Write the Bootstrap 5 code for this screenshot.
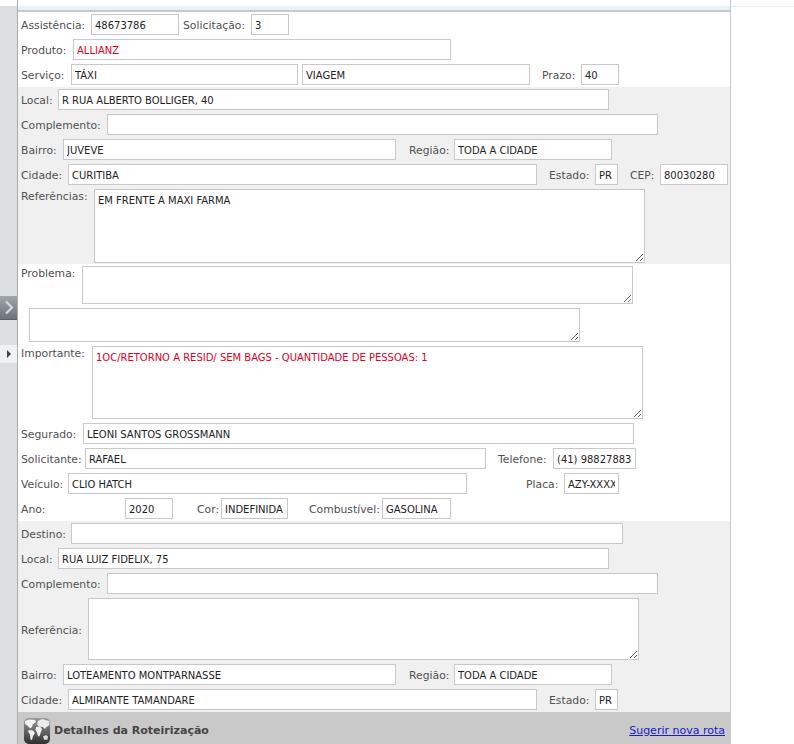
<!DOCTYPE html>
<html lang="pt-BR">
<head>
<meta charset="utf-8">
<title>Assistência</title>
<link href="https://cdn.jsdelivr.net/npm/bootstrap@5.3.0/dist/css/bootstrap.min.css" rel="stylesheet">
<style>
html,body{height:744px;overflow:hidden;background:#fff}
body{font-family:"DejaVu Sans",sans-serif;font-size:10.8px;color:#505050}
.shell{height:744px;width:731px;position:relative}
.side{width:18px;background:#dcdfe0;border-right:1px solid #a9acad;flex:none}
.sidecap{height:6px;background:#fff}
.pane{width:713px;flex:none;border-right:1px solid #c8c8c8}
.topline{position:absolute;left:0;top:6px;width:794px;height:1px;background:#e4eef0}
.topband{height:4px;background:#e8f3f5;margin-top:6px}
.topedge{height:2px;background:#c8c8c8}
.sect{display:flex;flex-direction:column;gap:4px;padding:2px 0 2px 3px}
.sect-gray{background:#f0f0f0}
.tight{padding-bottom:1px}
.fr{display:flex;height:21px;align-items:center;flex:none}
.fr-top{align-items:flex-start;height:auto}
.lb{flex:none;white-space:nowrap;line-height:21px;padding-top:1px}
.fr-top .lb{line-height:14px;padding-top:1px}
.fr-top .lb-mid{padding-top:3px}
.fr .form-control{flex:none;height:21px;min-height:0;padding:1px 3px 0;border:1px solid #c8c8c8;border-radius:0;font-family:"DejaVu Sans Condensed","DejaVu Sans",sans-serif;font-size:11.1px;color:#222;background:#fff;box-shadow:none}
.fr textarea.form-control{padding:4px 3px;resize:both;line-height:13px}
.redtx.form-control{color:#e2001a!important}
.foot{height:32px;background:#c9c9c9;padding:5px 5px 0 6px}
.foot-title{font-weight:700;font-size:11px;color:#444;padding-top:1px}
.foot-link{font-size:11px;color:#1a1ac8;text-decoration:underline;padding-top:1px}
.handle{position:absolute;left:0;top:296px;width:17px;height:24px;background:linear-gradient(#a0a6aa,#6c7379);border-bottom:1px solid #5a6066}
.tick{position:absolute;left:0;top:345px;width:17px;height:18px;background:#f0f1f1}
.h38{height:38px!important}.h34{height:34px!important}.h74{height:74px!important}.h73{height:73px!important}.h62{height:62px!important}
.w23{width:23px}.w38{width:38px}.w48{width:48px}.w55{width:55px}.w67{width:67px}.w68{width:68px}.w69{width:69px}.w83{width:83px}.w88{width:88px}.w158{width:158px}.w227{width:227px}.w228{width:228px}.w333{width:333px}.w378{width:378px}.w399{width:399px}.w401{width:401px}.w469{width:469px}.w551{width:551px}.w552{width:552px}
.l24{width:24px}.l26{width:26px}.l30{width:30px}.l37{width:37px}.l38{width:38px}.l39{width:39px}.l42{width:42px}.l45{width:45px}.l46{width:46px}.l47{width:47px}.l50{width:50px}.l52{width:52px}.l55{width:55px}.l61{width:61px}.l62{width:62px}.l64{width:64px}.l67{width:67px}.l68{width:68px}.l70{width:70px}.l71{width:71px}.l73{width:73px}.l86{width:86px}.l104{width:104px}
.m4{margin-left:4px}.m8{margin-left:8px}.m12{margin-left:12px}.m13{margin-left:13px}.m21{margin-left:21px}.m24{margin-left:24px}.m59{margin-left:59px}.m8i{margin-left:8px}
</style>
</head>
<body>
<div class="topline"></div>
<div class="shell d-flex">
  <div class="side"><div class="sidecap"></div></div>
  <div class="pane d-flex flex-column">
    <div class="topband"></div>
    <div class="topedge"></div>

    <div class="sect">
      <div class="fr"><span class="lb l70">Assistência:</span><input class="form-control w88" value="48673786" readonly><span class="lb l68 m4">Solicitação:</span><input class="form-control w38" value="3" readonly></div>
      <div class="fr"><span class="lb l52">Produto:</span><input class="form-control redtx w378" value="ALLIANZ" readonly></div>
      <div class="fr"><span class="lb l50">Serviço:</span><input class="form-control w227" value="TÁXI" readonly><input class="form-control w228 m4" value="VIAGEM" readonly><span class="lb l39 m12">Prazo:</span><input class="form-control w38" value="40" readonly></div>
    </div>

    <div class="sect sect-gray tight">
      <div class="fr"><span class="lb l37">Local:</span><input class="form-control w551" value="R RUA ALBERTO BOLLIGER, 40" readonly></div>
      <div class="fr"><span class="lb l86">Complemento:</span><input class="form-control w551" value="" readonly></div>
      <div class="fr"><span class="lb l42">Bairro:</span><input class="form-control w333" value="JUVEVE" readonly><span class="lb l45 m13">Região:</span><input class="form-control w158" value="TODA A CIDADE" readonly></div>
      <div class="fr"><span class="lb l47">Cidade:</span><input class="form-control w469" value="CURITIBA" readonly><span class="lb l46 m12">Estado:</span><input class="form-control w23" value="PR" readonly><span class="lb l30 m12">CEP:</span><input class="form-control w68" value="80030280" readonly></div>
      <div class="fr fr-top"><span class="lb l73">Referências:</span><textarea class="form-control w551 h74" readonly>EM FRENTE A MAXI FARMA</textarea></div>
    </div>

    <div class="sect">
      <div class="fr fr-top"><span class="lb l61">Problema:</span><textarea class="form-control w551 h38" readonly></textarea></div>
      <div class="fr fr-top"><textarea class="form-control w551 h34 m8i" readonly></textarea></div>
      <div class="fr fr-top"><span class="lb l71">Importante:</span><textarea class="form-control redtx w551 h73" readonly>1OC/RETORNO A RESID/ SEM BAGS - QUANTIDADE DE PESSOAS: 1</textarea></div>
      <div class="fr"><span class="lb l62">Segurado:</span><input class="form-control w551" value="LEONI SANTOS GROSSMANN" readonly></div>
      <div class="fr"><span class="lb l64">Solicitante:</span><input class="form-control w401" value="RAFAEL" readonly><span class="lb l55 m12">Telefone:</span><input class="form-control w83" value="(41) 988278838" readonly></div>
      <div class="fr"><span class="lb l47">Veículo:</span><input class="form-control w399" value="CLIO HATCH" readonly><span class="lb l38 m59">Placa:</span><input class="form-control w55" value="AZY-XXXX" readonly></div>
      <div class="fr"><span class="lb l104">Ano:</span><input class="form-control w48" value="2020" readonly><span class="lb l24 m24">Cor:</span><input class="form-control w67" value="INDEFINIDA" readonly><span class="lb l73 m21">Combustível:</span><input class="form-control w69" value="GASOLINA" readonly></div>
    </div>

    <div class="sect sect-gray">
      <div class="fr"><span class="lb l50">Destino:</span><input class="form-control w552" value="" readonly></div>
      <div class="fr"><span class="lb l37">Local:</span><input class="form-control w551" value="RUA LUIZ FIDELIX, 75" readonly></div>
      <div class="fr"><span class="lb l86">Complemento:</span><input class="form-control w551" value="" readonly></div>
      <div class="fr fr-top align-items-center h62"><span class="lb lb-mid l67">Referência:</span><textarea class="form-control w551 h62" readonly></textarea></div>
      <div class="fr"><span class="lb l42">Bairro:</span><input class="form-control w333" value="LOTEAMENTO MONTPARNASSE" readonly><span class="lb l45 m13">Região:</span><input class="form-control w158" value="TODA A CIDADE" readonly></div>
      <div class="fr"><span class="lb l47">Cidade:</span><input class="form-control w469" value="ALMIRANTE TAMANDARE" readonly><span class="lb l46 m12">Estado:</span><input class="form-control w23" value="PR" readonly></div>
    </div>

    <div class="foot d-flex align-items-center justify-content-between">
      <div class="d-flex align-items-center gap-1">
        <svg width="26" height="26" viewBox="0 0 26 26" aria-hidden="true">
          <defs><linearGradient id="gb" x1="0" y1="0" x2="0" y2="1"><stop offset="0" stop-color="#9a9a9a"/><stop offset="1" stop-color="#303030"/></linearGradient></defs>
          <rect x="0" y="0" width="26" height="26" rx="5" fill="url(#gb)"/>
          <path d="M1 3 5 1.5l6 .5 1 2-3 2-1 3-2 1.500-2-2.500-3-2z" fill="#f4f4f4"/>
          <path d="M5 12l4 .5 2 2.500-2 3-1 4-1.500-.5-.5-5-2-3z" fill="#f0f0f0"/>
          <path d="M14 3l4-2 7 2 .5 4-3 2-1.500 2-2-2-4-.5-2-2z" fill="#ececec"/>
          <path d="M12 9l4-.5 2 2.500-1 3-1.500 4-1.500.5-1-4-1.500-2.500z" fill="#f0f0f0"/>
          <path d="M19 18.500l3-1.500 2 1.500-.5 3-3 .5z" fill="#dedede"/>
        </svg>
        <span class="foot-title">Detalhes da Roteirização</span>
      </div>
      <a class="foot-link" href="#">Sugerir nova rota</a>
    </div>
  </div>
  <div class="handle d-flex align-items-center justify-content-center">
    <svg width="10" height="15" viewBox="0 0 10 15" aria-hidden="true"><path d="M2 1.500 8 7.500l-6 6" fill="none" stroke="#d4d7da" stroke-width="2.200"/></svg>
  </div>
  <div class="tick d-flex align-items-center justify-content-center">
    <svg width="6" height="8" viewBox="0 0 6 8" aria-hidden="true"><path d="M1 0l4 4-4 4z" fill="#3c4246"/></svg>
  </div>
</div>
<script src="https://cdn.jsdelivr.net/npm/bootstrap@5.3.0/dist/js/bootstrap.bundle.min.js"></script>
</body>
</html>
